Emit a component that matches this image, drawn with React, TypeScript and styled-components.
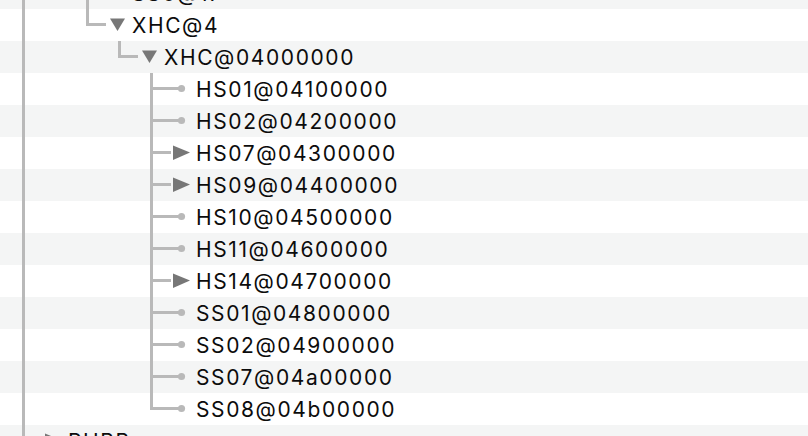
import React from "react";
import styled, { createGlobalStyle, css } from "styled-components";

type Guide = "pipe" | "blank" | "tee" | "elbow";
type Toggle = "open" | "closed" | "leaf";

interface Node {
  label: string;
  guides: Guide[];
  toggle: Toggle;
}

const LINE = "#b9b9b9";
const ARROW = "#777777";

const hs = (label: string, toggle: Toggle = "leaf", last = false): Node => ({
  label,
  guides: ["pipe", "blank", "blank", "blank", last ? "elbow" : "tee"],
  toggle,
});

const nodes: Node[] = [
  { label: "SS0@17", guides: ["pipe", "blank", "tee"], toggle: "closed" },
  { label: "XHC@4", guides: ["pipe", "blank", "elbow"], toggle: "open" },
  { label: "XHC@04000000", guides: ["pipe", "blank", "blank", "elbow"], toggle: "open" },
  hs("HS01@04100000"),
  hs("HS02@04200000"),
  hs("HS07@04300000", "closed"),
  hs("HS09@04400000", "closed"),
  hs("HS10@04500000"),
  hs("HS11@04600000"),
  hs("HS14@04700000", "closed"),
  hs("SS01@04800000"),
  hs("SS02@04900000"),
  hs("SS07@04a00000"),
  hs("SS08@04b00000", "leaf", true),
  { label: "PUBB", guides: ["tee"], toggle: "closed" },
];

const GlobalStyle = createGlobalStyle`
  html, body {
    margin: 0;
    padding: 0;
    background: #fff;
    overflow: hidden;
  }
`;

const TreeView = styled.div`
  width: 808px;
  height: 436px;
  overflow: hidden;
  font-family: Inter, "Noto Sans", sans-serif;
`;

const List = styled.div`
  display: flex;
  flex-direction: column;
  margin-top: -23px;
`;

const Row = styled.div<{ $striped: boolean }>`
  display: flex;
  align-items: stretch;
  height: 32px;
  padding-left: 8px;
  background: ${(p) => (p.$striped ? "#f4f5f5" : "#ffffff")};
`;

const GuideCell = styled.div<{ $kind: Guide }>`
  position: relative;
  flex: 0 0 32px;
  ${(p) =>
    p.$kind !== "blank" &&
    css`
      &::before {
        content: "";
        position: absolute;
        left: 14px;
        top: 0;
        width: 3px;
        height: ${p.$kind === "elbow" ? "17px" : "100%"};
        background: ${LINE};
      }
    `}
  ${(p) =>
    (p.$kind === "tee" || p.$kind === "elbow") &&
    css`
      &::after {
        content: "";
        position: absolute;
        left: 14px;
        right: 0;
        top: 14px;
        height: 3px;
        background: ${LINE};
      }
    `}
`;

const ToggleIcon = styled.svg`
  flex: 0 0 28px;
  width: 28px;
  height: 32px;
  display: block;
`;

const Label = styled.span`
  font-size: 21px;
  font-weight: 400;
  line-height: 33px;
  letter-spacing: 1.6px;
  color: #0c0c0c;
  white-space: nowrap;
`;

const Toggler = ({ kind }: { kind: Toggle }) => (
  <ToggleIcon viewBox="0 0 28 32">
    {kind === "open" && (
      <>
        <rect x="0" y="14" width="2" height="3" fill={LINE} />
        <polygon points="6,9.5 21,9.5 13.5,22" fill={ARROW} />
      </>
    )}
    {kind === "closed" && (
      <>
        <rect x="0" y="14" width="3" height="3" fill={LINE} />
        <polygon points="5,8.5 5,23 22,15.5" fill={ARROW} />
      </>
    )}
    {kind === "leaf" && (
      <>
        <rect x="0" y="14" width="12" height="3" fill={LINE} />
        <circle cx="13.5" cy="15.5" r="3.6" fill={LINE} />
      </>
    )}
  </ToggleIcon>
);

export default function App() {
  return (
    <>
      <GlobalStyle />
      <TreeView>
        <List>
          {nodes.map((n, i) => (
            <Row key={n.label} $striped={i % 2 === 0}>
              {n.guides.map((g, j) => (
                <GuideCell key={j} $kind={g} />
              ))}
              <Toggler kind={n.toggle} />
              <Label>{n.label}</Label>
            </Row>
          ))}
        </List>
      </TreeView>
    </>
  );
}
